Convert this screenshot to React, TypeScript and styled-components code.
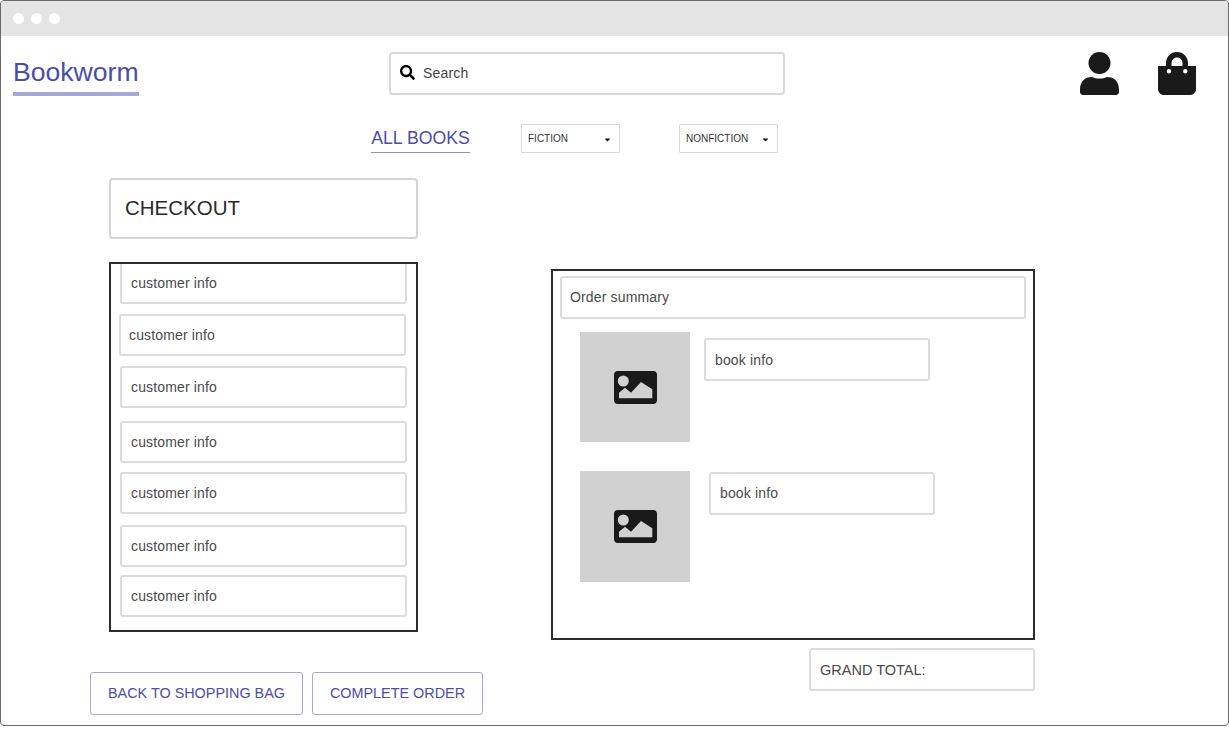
import styled, { createGlobalStyle } from "styled-components";
import { FaCaretDown, FaSearch } from "react-icons/fa";

const GlobalStyle = createGlobalStyle`
  html, body {
    margin: 0;
    padding: 0;
    background: #fff;
  }
  * {
    box-sizing: border-box;
  }
`;

const Window = styled.div`
  width: 1229px;
  height: 726px;
  border: 1px solid #6a6a6a;
  border-radius: 4px;
  overflow: hidden;
  font-family: "Liberation Sans", Arial, sans-serif;
  color: #333;
  background: #fff;
`;

const TitleBar = styled.div`
  height: 35px;
  background: #e4e4e4;
  display: flex;
  align-items: center;
  gap: 7px;
  padding: 0 0 1px 12px;
`;

const Dot = styled.span`
  width: 11px;
  height: 11px;
  border-radius: 50%;
  background: #fff;
`;

const Header = styled.header`
  height: 63px;
  display: flex;
  align-items: flex-start;
  padding: 16px 31px 0 12px;
`;

const Logo = styled.div`
  width: 126px;
  height: 44px;
  border-bottom: 4px solid #a5a7d6;
  color: #4a4ea8;
  font-size: 26.6px;
  line-height: 40px;
  white-space: nowrap;
`;

const SearchBox = styled.div`
  width: 396px;
  height: 43px;
  margin-left: 250px;
  display: flex;
  align-items: center;
  gap: 8px;
  padding: 0 0 2px 9px;
  border: 2px solid #d8d8d8;
  border-radius: 4px;
  font-size: 14px;
  letter-spacing: 0.2px;
  color: #444;
`;

const HeaderIcons = styled.div`
  margin-left: auto;
  display: flex;
  gap: 39px;
`;

const Nav = styled.nav`
  height: 79px;
  display: flex;
  align-items: flex-start;
  padding: 25px 0 0 370px;
`;

const NavLink = styled.a`
  width: 99px;
  height: 28px;
  margin-top: 1px;
  border-bottom: 1px solid #8f92c8;
  color: #4a4ea8;
  font-size: 17.7px;
  line-height: 26px;
  text-align: center;
  white-space: nowrap;
`;

const Dropdown = styled.div<{ $left: number }>`
  width: 99px;
  height: 29px;
  margin-left: ${(props) => props.$left}px;
  display: flex;
  align-items: center;
  justify-content: space-between;
  padding: 0 7px 1px 6px;
  border: 1px solid #d8d8d8;
  border-radius: 1px;
  font-size: 10px;
  color: #333;
  svg {
    color: #111;
    margin-top: 2px;
  }
`;

const Main = styled.main`
  display: flex;
  align-items: flex-start;
  padding-left: 89px;
`;

const LeftColumn = styled.div`
  width: 393px;
  display: flex;
  flex-direction: column;
`;

const CheckoutTitle = styled.div`
  width: 309px;
  height: 61px;
  margin-left: 19px;
  padding: 0 0 2px 14px;
  display: flex;
  align-items: center;
  border: 2px solid #d4d4d4;
  border-radius: 4px;
  font-size: 20.5px;
  color: #2b2b2b;
`;

const CustomerPanel = styled.section`
  width: 309px;
  height: 370px;
  margin: 23px 0 0 19px;
  border: 2px solid #2d2d2d;
  overflow: hidden;
  display: flex;
  flex-direction: column;
`;

const CustomerRow = styled.div<{ $top: number; $shift?: number; $clipped?: boolean }>`
  flex: none;
  width: 287px;
  height: ${(props) => (props.$clipped ? 40 : 42)}px;
  margin: ${(props) => props.$top}px 0 0 ${(props) => 9 - (props.$shift ?? 0)}px;
  padding-left: ${(props) => 9 - (props.$shift ?? 0)}px;
  display: flex;
  align-items: center;
  border: 2px solid #dcdcdc;
  border-top: ${(props) => (props.$clipped ? "none" : "2px solid #dcdcdc")};
  border-radius: ${(props) => (props.$clipped ? "0 0 3px 3px" : "3px")};
  font-size: 14px;
  letter-spacing: 0.15px;
  color: #4a4a4a;
`;

const Actions = styled.div`
  margin-top: 40px;
  display: flex;
  gap: 9px;
`;

const ActionButton = styled.button<{ $width: number }>`
  width: ${(props) => props.$width}px;
  height: 43px;
  padding: 0 0 2px;
  background: #fff;
  border: 1px solid #a5a7d6;
  border-radius: 3px;
  color: #4a4ea8;
  font-family: inherit;
  font-size: 14.4px;
`;

const RightColumn = styled.div`
  width: 484px;
  margin-left: 68px;
  padding-top: 91px;
  display: flex;
  flex-direction: column;
  align-items: flex-end;
`;

const SummaryPanel = styled.section`
  width: 484px;
  height: 371px;
  padding: 5px 7px 0;
  border: 2px solid #2d2d2d;
`;

const SummaryHeading = styled.div`
  width: 466px;
  height: 43px;
  padding: 0 0 2px 8px;
  display: flex;
  align-items: center;
  border: 2px solid #dcdcdc;
  border-radius: 3px;
  font-size: 14px;
  letter-spacing: 0.15px;
  color: #4a4a4a;
`;

const BookRow = styled.div<{ $top: number; $gap: number; $infoTop: number; $thumb: number }>`
  height: ${(props) => props.$thumb}px;
  margin: ${(props) => props.$top}px 0 0 20px;
  display: flex;
  align-items: flex-start;
  gap: ${(props) => props.$gap}px;
  & > :last-child {
    margin-top: ${(props) => props.$infoTop}px;
  }
`;

const BookInfo = styled.div<{ $lift: number }>`
  width: 226px;
  height: 43px;
  padding: 0 0 ${(props) => props.$lift}px 9px;
  display: flex;
  align-items: center;
  border: 2px solid #dcdcdc;
  border-radius: 3px;
  font-size: 14px;
  letter-spacing: 0.15px;
  color: #4a4a4a;
`;

const Thumb = styled.div<{ $height: number }>`
  width: 110px;
  height: ${(props) => props.$height}px;
  display: flex;
  align-items: center;
  justify-content: center;
  background: #d1d1d1;
  svg {
    margin-left: 1px;
  }
`;

const GrandTotal = styled.div`
  width: 226px;
  height: 43px;
  margin-top: 8px;
  padding-left: 9px;
  display: flex;
  align-items: center;
  border: 2px solid #dcdcdc;
  border-radius: 3px;
  font-size: 14.5px;
  color: #4a4a4a;
`;

const UserIcon = () => (
  <svg width="39" height="43" viewBox="0 0 39 43" fill="#1a1a1a">
    <circle cx="19.5" cy="11" r="11" />
    <path d="M0 37.500C0 29.500 5 25 12 25c2.500 1 4.500 1.500 7.500 1.500S24.500 26 27 25c7 0 12 4.500 12 12.500V40c0 1.600-1.400 3-3 3H3c-1.600 0-3-1.400-3-3z" />
  </svg>
);

const BagIcon = () => (
  <svg width="39" height="43" viewBox="0 0 39 43" fill="#1a1a1a">
    <path
      fillRule="evenodd"
      d="M8 14v-3C8 4.900 12.900 0 19 0s11 4.900 11 11v3h8v23c0 3.300-2.700 6-6 6H6c-3.300 0-6-2.700-6-6V14zM13.500 14h11v-3c0-3-2.500-5.500-5.500-5.500S13.500 8 13.500 11zM11 17a2.200 2.200 0 1 0 0 4.400 2.200 2.200 0 0 0 0-4.400zM27.300 17a2.200 2.200 0 1 0 0 4.400 2.200 2.200 0 0 0 0-4.400z"
    />
  </svg>
);

const PictureIcon = () => (
  <svg width="43" height="33" viewBox="0 0 43 33" fill="#1a1a1a">
    <path
      fillRule="evenodd"
      d="M3.500 0h36c1.900 0 3.500 1.600 3.500 3.500v26c0 1.900-1.600 3.500-3.500 3.500h-36C1.600 33 0 31.400 0 29.500v-26C0 1.600 1.600 0 3.500 0zM9.300 4.500a5.500 5.500 0 1 0 0 11 5.500 5.500 0 0 0 0-11zM5 27.300h33.300v-9L27 11 17 21.700 11 16.700l-6 5z"
    />
  </svg>
);

const customerRows = [
  { top: 0, clipped: true },
  { top: 10, shift: 1 },
  { top: 10 },
  { top: 13 },
  { top: 9 },
  { top: 11 },
  { top: 8 },
];

const books = [
  { top: 13, gap: 14, infoTop: 6, thumb: 110, lift: 0 },
  { top: 29, gap: 19, infoTop: 1, thumb: 111, lift: 2 },
];

export default function App() {
  return (
    <>
      <GlobalStyle />
      <Window>
        <TitleBar>
          <Dot />
          <Dot />
          <Dot />
        </TitleBar>
        <Header>
          <Logo>Bookworm</Logo>
          <SearchBox>
            <FaSearch size={15} color="#000" />
            Search
          </SearchBox>
          <HeaderIcons>
            <UserIcon />
            <BagIcon />
          </HeaderIcons>
        </Header>
        <Nav>
          <NavLink>ALL BOOKS</NavLink>
          <Dropdown $left={51}>
            FICTION
            <FaCaretDown size={9} />
          </Dropdown>
          <Dropdown $left={59}>
            NONFICTION
            <FaCaretDown size={9} />
          </Dropdown>
        </Nav>
        <Main>
          <LeftColumn>
            <CheckoutTitle>CHECKOUT</CheckoutTitle>
            <CustomerPanel>
              {customerRows.map((row, index) => (
                <CustomerRow key={index} $top={row.top} $shift={row.shift} $clipped={row.clipped}>
                  customer info
                </CustomerRow>
              ))}
            </CustomerPanel>
            <Actions>
              <ActionButton $width={213}>BACK TO SHOPPING BAG</ActionButton>
              <ActionButton $width={171}>COMPLETE ORDER</ActionButton>
            </Actions>
          </LeftColumn>
          <RightColumn>
            <SummaryPanel>
              <SummaryHeading>Order summary</SummaryHeading>
              {books.map((book, index) => (
                <BookRow key={index} $top={book.top} $gap={book.gap} $infoTop={book.infoTop} $thumb={book.thumb}>
                  <Thumb $height={book.thumb}>
                    <PictureIcon />
                  </Thumb>
                  <BookInfo $lift={book.lift}>book info</BookInfo>
                </BookRow>
              ))}
            </SummaryPanel>
            <GrandTotal>GRAND TOTAL:</GrandTotal>
          </RightColumn>
        </Main>
      </Window>
    </>
  );
}
